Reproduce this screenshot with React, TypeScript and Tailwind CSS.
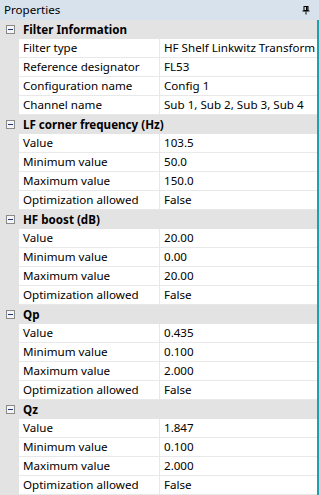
type Row = [string, string]
type Group = { title: string; rows: Row[] }

const groups: Group[] = [
  {
    title: "Filter Information",
    rows: [
      ["Filter type", "HF Shelf Linkwitz Transform"],
      ["Reference designator", "FL53"],
      ["Configuration name", "Config 1"],
      ["Channel name", "Sub 1, Sub 2, Sub 3, Sub 4"],
    ],
  },
  {
    title: "LF corner frequency (Hz)",
    rows: [
      ["Value", "103.5"],
      ["Minimum value", "50.0"],
      ["Maximum value", "150.0"],
      ["Optimization allowed", "False"],
    ],
  },
  {
    title: "HF boost (dB)",
    rows: [
      ["Value", "20.00"],
      ["Minimum value", "0.00"],
      ["Maximum value", "20.00"],
      ["Optimization allowed", "False"],
    ],
  },
  {
    title: "Qp",
    rows: [
      ["Value", "0.435"],
      ["Minimum value", "0.100"],
      ["Maximum value", "2.000"],
      ["Optimization allowed", "False"],
    ],
  },
  {
    title: "Qz",
    rows: [
      ["Value", "1.847"],
      ["Minimum value", "0.100"],
      ["Maximum value", "2.000"],
      ["Optimization allowed", "False"],
    ],
  },
]

const PinIcon = () => (
  <svg width="8" height="9" viewBox="0 0 8 9" className="block">
    <rect x="2" y="0.5" width="4" height="4" fill="none" stroke="#000" strokeWidth="1" />
    <rect x="4" y="1" width="1.5" height="3.5" fill="#000" />
    <rect x="0.5" y="4.5" width="7" height="1" fill="#000" />
    <rect x="3.5" y="5.5" width="1" height="3" fill="#000" />
  </svg>
)

const MinusBox = () => (
  <div className="w-[9px] h-[9px] border border-[#8a8a8a] bg-[#f4f4f4] flex items-center justify-center">
    <div className="w-[5px] h-px bg-[#1b3a7a]" />
  </div>
)

const App = () => {
  return (
    <div
      className="w-[319px] h-[495px] overflow-hidden bg-white text-[11.6px] text-black flex flex-col"
      style={{ fontFamily: '"Segoe UI", "Noto Sans", sans-serif' }}
    >
      <div className="h-[20px] shrink-0 bg-[#d8e2ec] flex items-center justify-between pl-[4px] pr-[9px]">
        <span className="leading-none">Properties</span>
        <PinIcon />
      </div>
      <div className="flex-1 flex border-r-2 border-[#1ba3ad]">
        <div className="flex-1 flex flex-col">
          {groups.map((g) => (
            <div key={g.title} className="flex flex-col">
              <div className="h-[19px] bg-[#e3e3e3] flex items-center">
                <div className="w-[19px] flex justify-center pl-[1px]">
                  <MinusBox />
                </div>
                <span className="font-bold pl-[4px] leading-none">{g.title}</span>
              </div>
              {g.rows.map(([name, value]) => (
                <div key={name} className="h-[19px] flex">
                  <div className="w-[19px] shrink-0 bg-[#e3e3e3]" />
                  <div className="flex-1 flex border-b border-[#e8e8e8]">
                    <div className="w-[141px] shrink-0 border-r border-[#e8e8e8] pl-[4px] flex items-center leading-none whitespace-nowrap overflow-hidden">
                      {name}
                    </div>
                    <div className="flex-1 pl-[4px] flex items-center leading-none whitespace-nowrap overflow-hidden">
                      {value}
                    </div>
                  </div>
                </div>
              ))}
            </div>
          ))}
        </div>
      </div>
    </div>
  )
}

export default App
